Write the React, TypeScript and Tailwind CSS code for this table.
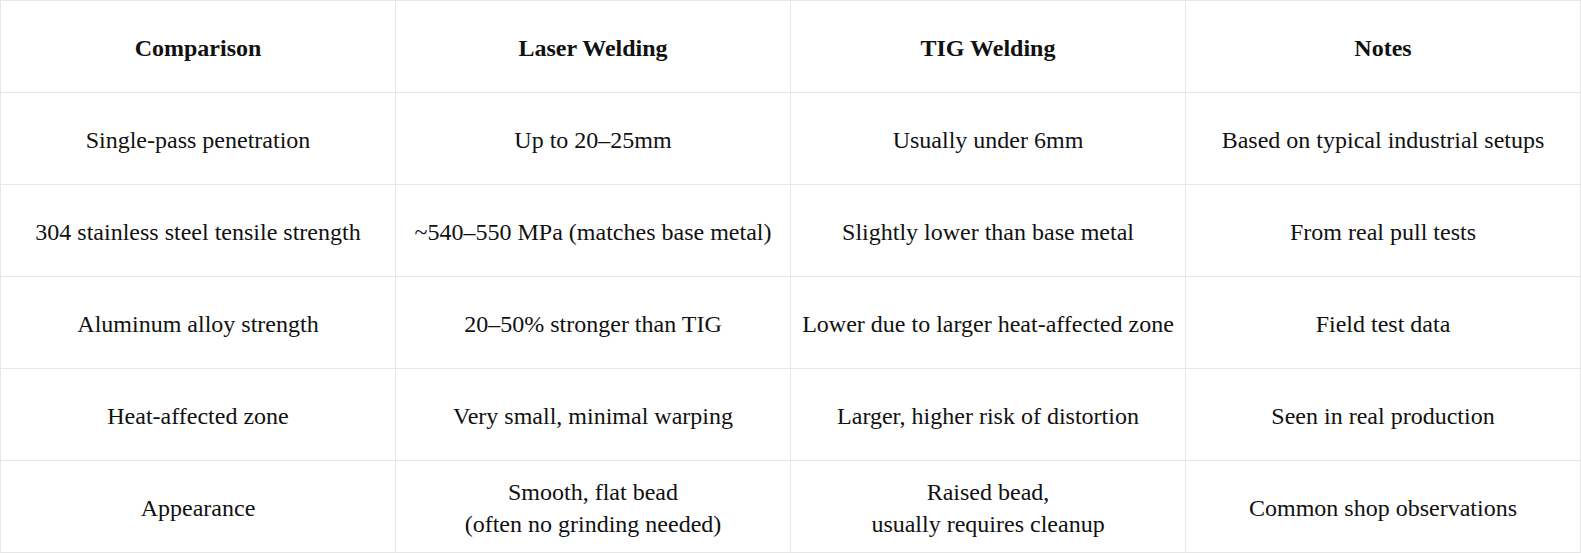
const header = ["Comparison", "Laser Welding", "TIG Welding", "Notes"];

const rows: string[][] = [
  ["Single-pass penetration", "Up to 20–25mm", "Usually under 6mm", "Based on typical industrial setups"],
  ["304 stainless steel tensile strength", "~540–550 MPa (matches base metal)", "Slightly lower than base metal", "From real pull tests"],
  ["Aluminum alloy strength", "20–50% stronger than TIG", "Lower due to larger heat-affected zone", "Field test data"],
  ["Heat-affected zone", "Very small, minimal warping", "Larger, higher risk of distortion", "Seen in real production"],
  ["Appearance", "Smooth, flat bead\n(often no grinding needed)", "Raised bead,\nusually requires cleanup", "Common shop observations"],
];

function Cell({ text, bold = false }: { text: string; bold?: boolean }) {
  return (
    <div
      className={`h-[92px] flex items-center justify-center text-center border-r border-b border-[#e6e6e6] px-2 pt-[2px] whitespace-pre-line leading-[32px] ${
        bold ? "font-bold" : ""
      }`}
    >
      {text}
    </div>
  );
}

export default function App() {
  return (
    <div className="w-[1581px] bg-white text-[#111] text-[24px] font-[family-name:Liberation_Serif,Times_New_Roman,serif]">
      <div className="grid grid-cols-[repeat(4,395px)] border-l border-t border-[#e6e6e6]">
        {header.map((h) => (
          <Cell key={h} text={h} bold />
        ))}
        {rows.map((r) => r.map((c, i) => <Cell key={r[0] + i} text={c} />))}
      </div>
    </div>
  );
}
